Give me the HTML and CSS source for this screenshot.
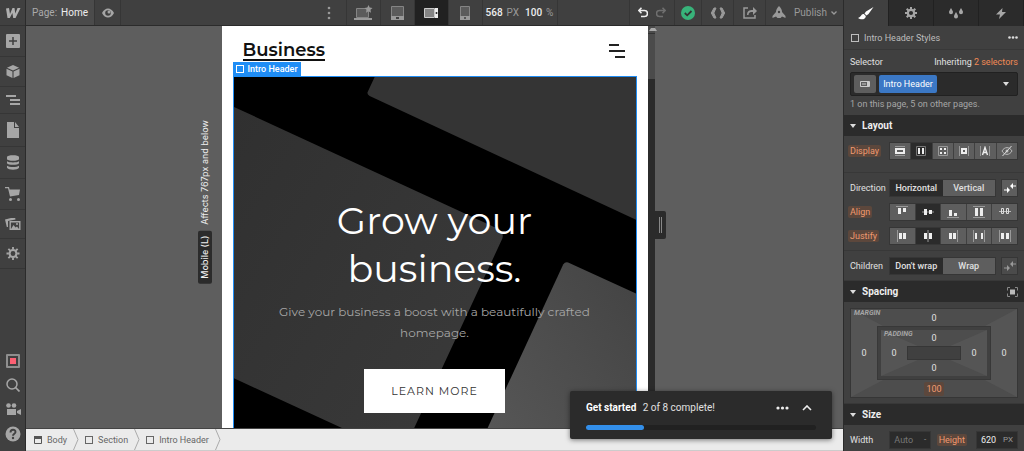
FILE: index.html
```html
<!DOCTYPE html>
<html lang="en">
<head>
    <meta charset="UTF-8">
    <meta name="viewport" content="width=device-width, initial-scale=1.0">
    <title>Designer - Home</title>
    <link rel="stylesheet" href="styles.css">
</head>
<body>

<div class="app">
    <nav class="sidebar">
        <button class="logo" aria-label="Menu">
            <svg width="16" height="12" viewBox="0 0 16 12"><path d="M1 1.500 4 1l1 6 2.500-6h2l.8 5.500L12.500 1H15.500l-5 10H8.200l-.8-5-2.600 5H2.500z" fill="#b0b0b0"/></svg>
        </button>
        <button class="tool" aria-label="Add">
            <svg width="14" height="14" viewBox="0 0 14 14"><rect width="14" height="14" rx="1" fill="#a6a6a6"/><path d="M7 3v8M3 7h8" stroke="#404040" stroke-width="1.500"/></svg>
        </button>
        <button class="tool" aria-label="Symbols">
            <svg width="14" height="13" viewBox="0 0 14 14"><path d="M7 0l6.500 3L7 6 .5 3zM0 4l6.400 3v7L0 11zM14 4 7.600 7v7l6.400-3z" fill="#a6a6a6"/></svg>
        </button>
        <button class="tool" aria-label="Navigator">
            <svg width="14" height="10" viewBox="0 0 14 10"><path d="M0 0h10v2H0zM4 4h10v2H4zM4 8h10v2H4z" fill="#a6a6a6"/></svg>
        </button>
        <button class="tool" aria-label="Pages">
            <svg width="14" height="16" viewBox="0 0 14 16"><path d="M1 0h7v6h5v10H1zM9 0l4 5H9z" fill="#a6a6a6"/></svg>
        </button>
        <button class="tool" aria-label="CMS">
            <svg width="14" height="15" viewBox="0 0 14 15"><path d="M1 2C1-.5 13-.5 13 2v2c0 2.400-12 2.400-12 0zM1 6.200c2 1.600 10 1.600 12 0v2c-1 2.200-11 2.200-12 0zM1 10.800c2 1.600 10 1.600 12 0v2c-1 2.500-11 2.500-12 0z" fill="#a6a6a6"/></svg>
        </button>
        <button class="tool" aria-label="Ecommerce">
            <svg width="16" height="14" viewBox="0 0 16 14"><path d="M0 0h4l.6 2.500H15L14 8 5 9.500 3 1.200H0z" fill="#a6a6a6"/><circle cx="5.500" cy="12.500" r="1.500" fill="#a6a6a6"/><circle cx="13.500" cy="12.500" r="1.500" fill="#a6a6a6"/></svg>
        </button>
        <button class="tool" aria-label="Assets">
            <svg width="16" height="12" viewBox="0 0 16 12"><path d="M0 1.500 10-1l.5 2.500L3 3v6L1.800 9z" fill="#a6a6a6"/><path d="M5.200 3.700h9.600v8H5.200z" fill="none" stroke="#a6a6a6" stroke-width="1.400"/><path d="M6 11l2.500-4 2 2.500 1.500-1L14 11z" fill="#a6a6a6"/><circle cx="12" cy="6" r="1" fill="#a6a6a6"/></svg>
        </button>
        <button class="tool" aria-label="Settings">
            <svg width="14" height="13" viewBox="0 0 14 14"><circle cx="7" cy="7" r="3.700" fill="none" stroke="#a6a6a6" stroke-width="2.200"/><path d="M7 0v2.500M7 11.500V14M0 7h2.500M11.500 7H14M2 2l2 2M10 10l2 2M12 2l-2 2M4 10l-2 2" stroke="#a6a6a6" stroke-width="2"/></svg>
        </button>
        <div class="helpers">
            <button aria-label="Audit">
                <svg width="14" height="14" viewBox="0 0 14 14"><rect width="14" height="14" rx="1" fill="#8e8e8e"/><rect x="2" y="2" width="10" height="10" fill="#404040"/><rect x="4" y="4" width="6" height="6" fill="#fb6073"/></svg>
            </button>
            <button aria-label="Search">
                <svg width="14" height="14" viewBox="0 0 14 14"><circle cx="6" cy="6" r="5" fill="none" stroke="#a6a6a6" stroke-width="1.500"/><path d="M9.500 9.500 13.500 13.500" stroke="#a6a6a6" stroke-width="1.700"/></svg>
            </button>
            <button aria-label="Video tutorials">
                <svg width="16" height="14" viewBox="0 0 16 14"><circle cx="3.500" cy="3.500" r="2.300" fill="#a6a6a6"/><circle cx="9" cy="3.500" r="2.300" fill="#a6a6a6"/><path d="M2 7h9v6H2zM12 9l4-2v6l-4-2z" fill="#a6a6a6"/></svg>
            </button>
            <button aria-label="Help">
                <svg width="16" height="16" viewBox="0 0 16 16"><circle cx="8" cy="8" r="7.500" fill="#a6a6a6"/><path d="M5.500 6.500C5.500 3 10.500 3 10.500 6 10.500 7.800 8 7.700 8 9.800" fill="none" stroke="#404040" stroke-width="1.900"/><circle cx="8" cy="12" r="1.200" fill="#404040"/></svg>
            </button>
        </div>
    </nav>

    <header class="topbar">
        <div class="bar-group">
            <button class="page-btn">Page: <span>Home</span></button>
            <button class="bar-btn preview-btn" aria-label="Preview">
                <svg width="12" height="10" viewBox="0 0 12 10"><path d="M0 5C3-1 9-1 12 5 9 11 3 11 0 5z" fill="#a6a6a6"/><circle cx="6" cy="5" r="2.800" fill="#404040"/><circle cx="7" cy="4" r="1.500" fill="#a6a6a6"/></svg>
            </button>
        </div>
        <div class="bar-group">
            <button class="bar-btn plain" aria-label="More breakpoints">
                <svg width="4" height="14" viewBox="0 0 4 14"><g fill="#999"><circle cx="2" cy="2" r="1.300"/><circle cx="2" cy="7" r="1.300"/><circle cx="2" cy="12" r="1.300"/></g></svg>
            </button>
            <button class="bar-btn device" aria-label="Desktop">
                <svg width="20" height="16" viewBox="0 0 20 16"><path d="M3.500 3.500h12v9h-12z" fill="#5b5b5b" stroke="#858585"/><path d="M1 13h18v2H1z" fill="#999"/><path d="M15.500 0l1.200 2.600 2.800.3-2 1.900.5 2.900-2.500-1.400L13 7.700l.5-2.900-2-1.900 2.800-.3z" fill="#999"/></svg>
            </button>
            <button class="bar-btn device" aria-label="Tablet">
                <svg width="13" height="14" viewBox="0 0 13 14"><path d="M.5.500h12v10h-12z" fill="#5b5b5b" stroke="#858585"/><path d="M0 10h13v4H0z" fill="#999"/><path d="M5 12h3" stroke="#404040" stroke-width="2"/></svg>
            </button>
            <button class="bar-btn device active" aria-label="Mobile landscape">
                <svg width="14" height="10" viewBox="0 0 14 10"><path d="M.5.500h10v9H.5z" fill="#858585" stroke="#ccc"/><path d="M11 0h3v10h-3z" fill="#eee"/><circle cx="12.500" cy="5" r="1" fill="#222"/></svg>
            </button>
            <button class="bar-btn device" aria-label="Mobile portrait">
                <svg width="10" height="14" viewBox="0 0 10 14"><path d="M.5.500h9v10h-9z" fill="#5b5b5b" stroke="#858585"/><path d="M0 10h10v4H0z" fill="#999"/><circle cx="5" cy="12" r="1" fill="#404040"/></svg>
            </button>
            <button class="bar-btn size-btn"><b>568</b> PX <b class="zoom">100</b> %</button>
        </div>
        <div class="bar-group end">
            <div class="history">
                <button aria-label="Undo">
                    <svg width="10" height="11" viewBox="0 0 10 11"><path d="M1 3.500h5.500a2.800 2.800 0 0 1 0 6H3M3.500.800.800 3.500l2.700 2.700" fill="none" stroke="#eee" stroke-width="1.600"/></svg>
                </button>
                <button aria-label="Redo">
                    <svg width="10" height="11" viewBox="0 0 10 11"><path d="M9 3.500H3.500a2.800 2.800 0 0 0 0 6H7M6.500.800 9.200 3.500 6.500 6.200" fill="none" stroke="#6f6f6f" stroke-width="1.600"/></svg>
                </button>
            </div>
            <button class="bar-btn" aria-label="Saved">
                <svg width="14" height="14" viewBox="0 0 14 14"><circle cx="7" cy="7" r="7" fill="#38b37a"/><path d="M3.800 7l2.400 2.300 4.300-4.300" fill="none" stroke="#333" stroke-width="1.800"/></svg>
            </button>
            <button class="bar-btn wide" aria-label="Code export">
                <svg width="16" height="12" viewBox="0 0 16 12"><path d="M6 1H4L1.300 6 4 11h2L3.800 6zM10 1h2l2.700 5L12 11h-2l2.200-5z" fill="#999" stroke="#999"/></svg>
            </button>
            <button class="bar-btn wide" aria-label="Share">
                <svg width="14" height="13" viewBox="0 0 14 13"><path d="M5 2H1v10h11V9" fill="none" stroke="#999" stroke-width="1.500"/><path d="M4 9c0-4 2-5 6-5V1l4 4-4 4V6C7 6 5.500 6.500 5.500 9z" fill="#999"/></svg>
            </button>
            <button class="bar-btn publish">
                <svg width="14" height="13" viewBox="0 0 14 13"><path d="M7 0c2 2 3 4 3 6l3.500 4v2L10 10.500 8.500 12h-3L4 10.500.500 12v-2L4 6c0-2 1-4 3-6z" fill="#999"/><circle cx="7" cy="6" r="1.200" fill="#404040"/></svg>
                <span>Publish</span>
                <svg width="6" height="4" viewBox="0 0 6 4"><path d="M.5.500 3 3 5.500.500" fill="none" stroke="#999" stroke-width="1.300"/></svg>
            </button>
        </div>
    </header>

    <main class="canvas">
        <div class="frame-wrap">
            <div class="frame-note"><span>Affects 767px and below</span> <strong>Mobile (L)</strong></div>
            <div class="frame">
                <div class="site-nav">
                    <a class="brand" href="#">Business</a>
                    <button class="burger" aria-label="Open menu">
                        <svg width="18" height="14" viewBox="0 0 18 14"><path d="M1 1h10M1 7h16M7 13h10" stroke="#222" stroke-width="2"/></svg>
                    </button>
                </div>
                <section class="hero">
                    <svg class="hero-bg" viewBox="0 0 403 465" preserveAspectRatio="xMidYMin slice">
                        <defs>
                            <linearGradient id="slab" x1="0" y1="0" x2="1" y2="1">
                                <stop offset="0" stop-color="#303030"/>
                                <stop offset="1" stop-color="#3c3c3c"/>
                            </linearGradient>
                            <linearGradient id="slabLight" x1="1" y1="0" x2="0" y2="1">
                                <stop offset="0" stop-color="#434343"/>
                                <stop offset="1" stop-color="#606060"/>
                            </linearGradient>
                        </defs>
                        <rect width="403" height="465" fill="#000"/>
                        <path d="M141 0 134 15Q133 17 136 19L403 143V0z" fill="#343434"/>
                        <path d="M0 30 264 152Q271 155 269 162L128 465V361L0 302z" fill="url(#slab)"/>
                        <path d="M202 465 330 188Q332 185 335 186L403 217V465z" fill="url(#slabLight)"/>
                    </svg>
                    <span class="element-tag"><i class="box-icon"></i>Intro Header</span>
                    <h1>Grow your business.</h1>
                    <p>Give your business a boost with a beautifully crafted homepage.</p>
                    <a class="cta" href="#">LEARN MORE</a>
                </section>
            </div>
            <div class="scrollbar"><span class="scroll-up"></span></div>
            <div class="resize-handle"></div>
        </div>
    </main>

    <footer class="breadcrumbs">
        <button class="crumb"><svg width="8" height="8" viewBox="0 0 8 8"><path d="M.5.500h7v7h-7z" fill="none" stroke="#555"/><path d="M0 0h8v3H0z" fill="#555"/></svg>Body</button>
        <svg class="crumb-sep" width="6" height="21" viewBox="0 0 6 21"><path d="M.5 0 5 10.500.500 21" fill="none" stroke="#aaa"/></svg>
        <button class="crumb"><i class="box-icon"></i>Section</button>
        <svg class="crumb-sep" width="6" height="21" viewBox="0 0 6 21"><path d="M.5 0 5 10.500.500 21" fill="none" stroke="#aaa"/></svg>
        <button class="crumb"><i class="box-icon"></i>Intro Header</button>
        <svg class="crumb-sep" width="6" height="21" viewBox="0 0 6 21"><path d="M.5 0 5 10.500.500 21" fill="none" stroke="#aaa"/></svg>
    </footer>

    <div class="toast">
        <div class="toast-head">
            <label for="setup"><b>Get started</b> 2 of 8 complete!</label>
            <button aria-label="More"><svg width="13" height="4" viewBox="0 0 13 4"><g fill="#eee"><circle cx="2" cy="2" r="1.600"/><circle cx="6.500" cy="2" r="1.600"/><circle cx="11" cy="2" r="1.600"/></g></svg></button>
            <button aria-label="Expand"><svg width="10" height="6" viewBox="0 0 10 6"><path d="M1 5l4-4 4 4" fill="none" stroke="#eee" stroke-width="1.600"/></svg></button>
        </div>
        <progress id="setup" value="2" max="8"></progress>
    </div>

    <aside class="panel">
        <div class="tabs">
            <button class="active" aria-label="Style">
                <svg width="16" height="13" viewBox="0 0 16 13"><path d="M15.500 0 8 4.500 6.500 6.500l2 2L10.500 7zM5.800 7C3 6.500 3.500 10 0 11c3 2.300 8 1.500 7.800-2z" fill="#fff"/></svg>
            </button>
            <button aria-label="Settings">
                <svg width="12" height="12" viewBox="0 0 14 14"><circle cx="7" cy="7" r="3.700" fill="none" stroke="#a6a6a6" stroke-width="2.600"/><path d="M7 0v2.500M7 11.500V14M0 7h2.500M11.500 7H14M2 2l2 2M10 10l2 2M12 2l-2 2M4 10l-2 2" stroke="#a6a6a6" stroke-width="2.400"/></svg>
            </button>
            <button aria-label="Style manager">
                <svg width="14" height="11" viewBox="0 0 14 11"><path d="M2 0C3 2 4 3 4 4.200a2 2 0 0 1-4 0C0 3 1 2 2 0zM12 0c1 2 2 3 2 4.200a2 2 0 0 1-4 0c0-1.200 1-2.200 2-4.200zM7 4c1 2 2 3 2 4.500a2 2 0 0 1-4 0C5 7 6 6 7 4z" fill="#a6a6a6"/></svg>
            </button>
            <button aria-label="Interactions">
                <svg width="10" height="11" viewBox="0 0 10 11"><path d="M6.500 0 0 6.500h4L3 11l7-7H6z" fill="#a6a6a6"/></svg>
            </button>
        </div>

        <div class="panel-title">
            <i class="box-icon"></i><span>Intro Header Styles</span>
            <button aria-label="More options"><svg width="10" height="3" viewBox="0 0 10 3"><g fill="#ddd"><circle cx="1.500" cy="1.500" r="1.300"/><circle cx="5" cy="1.500" r="1.300"/><circle cx="8.500" cy="1.500" r="1.300"/></g></svg></button>
        </div>

        <div class="selector">
            <div class="selector-head"><span>Selector</span><span>Inheriting <a href="#">2 selectors</a></span></div>
            <div class="selector-box">
                <button class="state" aria-label="Breakpoint"><svg width="10" height="6" viewBox="0 0 10 6"><path d="M.5.500h9v5h-9z" fill="none" stroke="#ccc"/><path d="M2 3h4" stroke="#ccc"/><path d="M7 1h3v4H7z" fill="#ccc"/></svg></button>
                <button class="class-tag">Intro Header</button>
                <button class="drop" aria-label="Show selectors"><i class="caret"></i></button>
            </div>
            <p>1 on this page, 5 on other pages.</p>
        </div>

        <h2><i class="caret"></i>Layout</h2>
        <div class="group display-group">
            <div class="row">
                <span class="name"><mark>Display</mark></span>
                <div class="segment">
                    <button aria-label="Block"><svg width="10" height="10" viewBox="0 0 10 10"><path d="M0 .5h10M0 9.500h10" stroke="#999"/><path d="M1 3h8v4H1z" fill="none" stroke="#eee" stroke-width="2"/></svg></button>
                    <button class="on" aria-label="Flex"><svg width="10" height="10" viewBox="0 0 10 10"><path d="M.5.500h9v9h-9z" fill="none" stroke="#777"/><path d="M2 2h2v6H2zM6 2h2v6H6z" fill="#eee"/></svg></button>
                    <button aria-label="Grid"><svg width="10" height="10" viewBox="0 0 10 10"><path d="M.5.500h9v9h-9z" fill="none" stroke="#999"/><path d="M2 2h2v2H2zM6 2h2v2H6zM2 6h2v2H2zM6 6h2v2H6z" fill="#eee"/></svg></button>
                    <button aria-label="Inline block"><svg width="10" height="10" viewBox="0 0 10 10"><path d="M.5 0v10M9.500 0v10" stroke="#999"/><path d="M3 3h4v4H3z" fill="none" stroke="#eee" stroke-width="2"/></svg></button>
                    <button aria-label="Inline"><svg width="10" height="10" viewBox="0 0 10 10"><path d="M.5 0v10M9.500 0v10" stroke="#999"/><path d="M2.500 9 5 1.500 7.500 9M3.300 6.500h3.400" fill="none" stroke="#eee" stroke-width="1.400"/></svg></button>
                    <button aria-label="None"><svg width="12" height="10" viewBox="0 0 12 10"><path d="M1 5c2.500-4.500 7.500-4.500 10 0-2.500 4.500-7.500 4.500-10 0z" fill="none" stroke="#bbb"/><circle cx="6" cy="5" r="1.500" fill="#bbb"/><path d="M1.500 10 10.500 0" stroke="#ddd"/></svg></button>
                </div>
            </div>
        </div>
        <div class="group">
            <div class="row">
                <span class="name">Direction</span>
                <div class="segment text"><button class="on">Horizontal</button><button>Vertical</button></div>
                <button class="swap" aria-label="Reverse"><svg width="12" height="10" viewBox="0 0 12 10"><path d="M7 3h5M0 7h5" stroke="#fff"/><path d="M9 0v6L6 3zM3 4v6l3-3z" fill="#fff"/></svg></button>
            </div>
            <div class="row">
                <span class="name"><mark>Align</mark></span>
                <div class="segment">
                    <button aria-label="Start"><svg width="12" height="12" viewBox="0 0 12 12"><path d="M0 .5h12" stroke="#999"/><path d="M2 2h3v6H2zM7 2h3v4H7z" fill="#eee"/></svg></button>
                    <button class="on" aria-label="Center"><svg width="12" height="12" viewBox="0 0 12 12"><path d="M0 6h12" stroke="#999"/><path d="M2 3h3v6H2zM7 4h3v4H7z" fill="#eee"/></svg></button>
                    <button aria-label="End"><svg width="12" height="12" viewBox="0 0 12 12"><path d="M0 11.500h12" stroke="#999"/><path d="M2 4h3v6H2zM7 7h3v3H7z" fill="#eee"/></svg></button>
                    <button aria-label="Stretch"><svg width="12" height="12" viewBox="0 0 12 12"><path d="M0 .5h12M0 11.500h12" stroke="#999"/><path d="M2 2h3v8H2zM7 2h3v8H7z" fill="#eee"/></svg></button>
                    <button aria-label="Baseline"><svg width="12" height="12" viewBox="0 0 12 12"><path d="M0 5.500h12" stroke="#bbb"/><path d="M2.500 2.500h2v5h-2zM7.500 2.500h2v5h-2z" fill="none" stroke="#ddd"/></svg></button>
                </div>
            </div>
            <div class="row">
                <span class="name"><mark>Justify</mark></span>
                <div class="segment">
                    <button aria-label="Start"><svg width="12" height="12" viewBox="0 0 12 12"><path d="M1.500 0v12" stroke="#999"/><path d="M3 3h3v6H3zM7 3h3v6H7z" fill="#eee"/></svg></button>
                    <button class="on" aria-label="Center"><svg width="12" height="12" viewBox="0 0 12 12"><path d="M6 0v12" stroke="#999"/><path d="M2 3h3v6H2zM7 3h3v6H7z" fill="#eee"/></svg></button>
                    <button aria-label="End"><svg width="12" height="12" viewBox="0 0 12 12"><path d="M10.500 0v12" stroke="#999"/><path d="M2 3h3v6H2zM6 3h3v6H6z" fill="#eee"/></svg></button>
                    <button aria-label="Space between"><svg width="12" height="12" viewBox="0 0 12 12"><path d="M.5 0v12M11.500 0v12" stroke="#999"/><path d="M2 3h2v6H2zM8 3h2v6H8z" fill="#eee"/></svg></button>
                    <button aria-label="Space around"><svg width="12" height="12" viewBox="0 0 12 12"><path d="M.5 0v12M11.500 0v12" stroke="#999"/><path d="M2 3h3v6H2zM7 3h3v6H7z" fill="#eee"/></svg></button>
                </div>
            </div>
        </div>
        <div class="group">
            <div class="row">
                <span class="name">Children</span>
                <div class="segment text"><button class="on">Don't wrap</button><button>Wrap</button></div>
                <button class="swap off" aria-label="Reverse wrap"><svg width="12" height="10" viewBox="0 0 12 10"><path d="M7 3h5M0 7h5" stroke="#999"/><path d="M9 0v6L6 3zM3 4v6l3-3z" fill="#999"/></svg></button>
            </div>
        </div>

        <h2><i class="caret"></i>Spacing
            <button aria-label="Center element"><svg width="11" height="10" viewBox="0 0 11 10"><path d="M3 .5H.5v3M8 .5h2.500v3M.5 6.500v3H3M10.500 6.500v3H8" fill="none" stroke="#888"/><path d="M3 2.500h5v5H3z" fill="#bbb"/></svg></button>
        </h2>
        <div class="group">
            <div class="spacing margin">
                <svg class="facets" viewBox="0 0 100 100" preserveAspectRatio="none"><path d="M0 0 50 50 0 100zM100 0 50 50 100 100z" fill="#555"/></svg>
                <em>MARGIN</em>
                <button class="top">0</button>
                <button class="left">0</button>
                <div class="spacing padding">
                    <svg class="facets" viewBox="0 0 100 100" preserveAspectRatio="none"><path d="M0 0 50 50 0 100zM100 0 50 50 100 100z" fill="#555"/></svg>
                    <em>PADDING</em>
                    <button class="top">0</button>
                    <button class="left">0</button>
                    <div class="core"></div>
                    <button class="right">0</button>
                    <button class="bottom">0</button>
                </div>
                <button class="right">0</button>
                <button class="bottom"><mark>100</mark></button>
            </div>
        </div>

        <h2><i class="caret"></i>Size</h2>
        <div class="group size-row">
            <label for="width">Width</label>
            <div class="field"><input id="width" type="text" placeholder="Auto"><span>-</span></div>
            <label for="height"><mark>Height</mark></label>
            <div class="field"><input id="height" type="text" value="620"><span>PX</span></div>
        </div>
    </aside>
</div>

</body>
</html>
```
FILE: styles.css
```css
* {
    box-sizing: border-box;
}
body {
    margin: 0;
    font-family: Roboto, "Liberation Sans", sans-serif;
    font-size: 9px;
    line-height: 12px;
    color: #e0e0e0;
    background-color: #5e5e5e;
}
button {
    display: flex;
    align-items: center;
    justify-content: center;
    padding: 0;
    border: none;
    background: none;
    color: inherit;
    font: inherit;
    cursor: pointer;
}
svg {
    display: block;
    flex: none;
}
a {
    text-decoration: none;
}
mark {
    padding: 1px 2px;
    border-radius: 2px;
    background-color: #5c473c;
    color: #f09a70;
}
.app {
    position: relative;
    display: grid;
    grid-template-columns: 26px 1fr 181px;
    grid-template-rows: 26px 1fr 22px;
    height: 100vh;
    overflow: hidden;
}

/* left toolbar */
.sidebar {
    grid-row: 1 / 4;
    display: flex;
    flex-direction: column;
    background-color: #404040;
    border-right: 1px solid #2b2b2b;
}
.logo {
    height: 26px;
    border-bottom: 1px solid #333;
}
.tool {
    padding: 8px 0;
    border-bottom: 1px solid #363636;
}
.helpers {
    display: flex;
    flex-direction: column;
    align-items: center;
    gap: 10px;
    margin-top: auto;
    padding-bottom: 9px;
}

/* top bar */
.topbar {
    display: grid;
    grid-template-columns: 1fr auto 1fr;
    background-color: #404040;
    border-bottom: 1px solid #2b2b2b;
    color: #999;
    font-size: 10px;
}
.bar-group {
    display: flex;
}
.bar-group.end {
    justify-content: flex-end;
}
.page-btn {
    gap: 4px;
    width: 68px;
    background-color: #4b4b4b;
    color: #aaa;
}
.page-btn span {
    color: #eee;
}
.bar-btn {
    width: 27px;
    border-left: 1px solid #363636;
}
.preview-btn {
    border-right: 1px solid #363636;
}
.bar-btn.plain {
    width: 34px;
    border: none;
}
.bar-btn.device {
    width: 34px;
}
.bar-btn.wide {
    width: 32px;
}
.bar-btn.active {
    background-color: #212121;
}
.bar-btn.size-btn {
    gap: 4px;
    width: 76px;
    border-right: 1px solid #363636;
}
.size-btn b {
    color: #eee;
    font-weight: 500;
}
.size-btn .zoom {
    margin-left: 2px;
}
.history {
    display: flex;
    gap: 8px;
    padding: 0 8px;
    border-left: 1px solid #363636;
}
.bar-btn.publish {
    gap: 4px;
    width: 78px;
}
.publish span {
    padding-left: 4px;
}

/* canvas */
.canvas {
    display: flex;
    justify-content: center;
    min-height: 0;
    border-bottom: 1px solid #444;
}
.frame-wrap {
    position: relative;
    width: 426px;
}
.frame {
    height: 100%;
    overflow: hidden;
    background-color: #fff;
    padding: 0 11px;
    font-family: Montserrat, "Liberation Sans", sans-serif;
}
.frame-note {
    position: absolute;
    right: 100%;
    top: 94px;
    display: flex;
    align-items: center;
    gap: 6px;
    margin-right: 10px;
    writing-mode: vertical-rl;
    rotate: 180deg;
    flex-direction: row-reverse;
    color: #eee;
    font-family: Inter, "Liberation Sans", sans-serif;
    line-height: 14px;
}
.frame-note strong {
    padding: 5px 0;
    border-radius: 2px;
    background-color: #2b2b2b;
    font-weight: 500;
}
.site-nav {
    display: flex;
    justify-content: space-between;
    align-items: center;
    height: 50px;
    padding: 0 11px 0 10px;
}
.brand {
    border-bottom: 2px solid #111;
    color: #111;
    font-size: 18px;
    font-weight: 600;
    line-height: 18px;
}
.hero {
    position: relative;
    display: flex;
    flex-direction: column;
    align-items: center;
    justify-content: center;
    height: 465px;
    padding: 0 40px 7px;
    border: 1px solid #1f8df5;
    text-align: center;
}
.hero-bg {
    position: absolute;
    inset: 0;
    width: 100%;
    height: 100%;
}
.element-tag {
    position: absolute;
    left: -1px;
    bottom: 100%;
    display: flex;
    align-items: center;
    gap: 4px;
    margin-bottom: 1px;
    padding: 1px 3px;
    background-color: #1f8df5;
    color: #fff;
    font-family: Roboto, "Liberation Sans", sans-serif;
    font-weight: 500;
}
.hero h1 {
    position: relative;
    margin: 0;
    width: 240px;
    color: #fff;
    font-size: 38px;
    font-weight: 400;
    line-height: 48px;
}
.hero p {
    position: relative;
    margin: 8px 0 26px;
    color: #a6a6a6;
    font-size: 12px;
    font-weight: 400;
    line-height: 21px;
}
.cta {
    position: relative;
    padding: 12px 27px;
    background-color: #fff;
    color: #333;
    font-size: 11px;
    letter-spacing: 1px;
    line-height: 20px;
}
.scrollbar {
    position: absolute;
    top: 0;
    bottom: 0;
    left: 100%;
    width: 7px;
    background: linear-gradient(#4b4b4b 53px, #2b2b2b 53px);
}
.scroll-up {
    display: block;
    height: 8px;
    padding-top: 2px;
    border-bottom: 1px solid #333;
}
.scroll-up::before {
    content: "";
    display: block;
    width: 4px;
    margin-left: 1px;
    border: 2px solid transparent;
    border-top: none;
    border-bottom: 3px solid #aaa;
}
.resize-handle {
    position: absolute;
    top: 185px;
    left: 433px;
    width: 11px;
    height: 28px;
    padding: 6px 4px;
    border-radius: 0 2px 2px 0;
    background-color: #2b2b2b;
}
.resize-handle::before {
    content: "";
    display: block;
    height: 16px;
    border: 1px solid #888;
    border-width: 0 1px;
}

/* breadcrumbs */
.box-icon {
    width: 8px;
    height: 8px;
    border: 1px solid currentColor;
}
.breadcrumbs {
    display: flex;
    align-items: center;
    padding-left: 8px;
    background-color: #ebebeb;
    border-bottom: 1px solid #ccc;
    color: #666;
}
.crumb {
    gap: 5px;
    padding-right: 6px;
}
.crumb-sep {
    margin-right: 6px;
}

/* onboarding toast */
.toast {
    position: absolute;
    right: 192px;
    bottom: 12px;
    width: 262px;
    padding: 10px 16px 9px;
    border-radius: 2px;
    background-color: #2b2b2b;
    box-shadow: 0 1px 5px rgba(0, 0, 0, 0.5);
    font-size: 10px;
    line-height: 14px;
}
.toast-head {
    display: flex;
    align-items: center;
    gap: 13px;
    padding-right: 4px;
}
.toast label {
    flex: 1;
}
.toast b {
    margin-right: 4px;
    color: #fff;
    font-weight: 700;
}
progress {
    display: block;
    width: 100%;
    height: 5px;
    margin-top: 10px;
    appearance: none;
    border: none;
}
progress::-webkit-progress-bar {
    border-radius: 3px;
    background-color: #212121;
}
progress::-webkit-progress-value {
    border-radius: 3px;
    background-color: #338fea;
}

/* style panel */
.panel {
    grid-column: 3;
    grid-row: 1 / 4;
    overflow: hidden;
    background-color: #404040;
    border-left: 1px solid #2b2b2b;
}
.tabs {
    display: flex;
    height: 26px;
    background-color: #2b2b2b;
}
.tabs button {
    flex: 1;
    border-right: 1px solid #212121;
}
.tabs .active {
    background-color: #404040;
}
.panel-title {
    display: flex;
    align-items: center;
    gap: 5px;
    height: 24px;
    padding: 0 6px 0 7px;
    border-bottom: 1px solid #383838;
    color: #bdbdbd;
}
.panel-title button {
    margin-left: auto;
}
.selector {
    padding: 6px;
    height: 65px;
}
.selector-head {
    display: flex;
    justify-content: space-between;
}
.selector-head a {
    color: #f08a55;
}
.selector-box {
    display: flex;
    align-items: center;
    gap: 3px;
    height: 24px;
    margin-top: 4px;
    padding: 0 3px;
    border: 1px solid #212121;
    border-radius: 2px;
    background-color: #2b2b2b;
}
.selector-box button {
    height: 18px;
    border-radius: 2px;
}
.state {
    width: 22px;
    background-color: #5e5e5e;
}
.class-tag {
    width: 58px;
    background-color: #3b78c5;
    color: #fff;
}
.selector-box .drop {
    margin-left: auto;
    padding-right: 5px;
}
.selector p {
    margin: 2px 0 0;
    color: #a6a6a6;
}
.caret {
    border: 3px solid transparent;
    border-top: 4px solid #ddd;
    border-bottom: none;
}
.panel h2 {
    display: flex;
    align-items: center;
    gap: 6px;
    height: 21px;
    margin: 0;
    padding: 0 6px;
    background-color: #2b2b2b;
    color: #eee;
    font-size: 10px;
    font-weight: 700;
}
.panel h2 button {
    margin-left: auto;
}
.group {
    display: flex;
    flex-direction: column;
    gap: 6px;
    padding: 6px 6px 5px;
    border-bottom: 1px solid #383838;
}
.display-group {
    padding-bottom: 12px;
}
.row {
    display: flex;
    align-items: center;
    height: 18px;
}
.name {
    width: 39px;
}
.name mark {
    margin-left: -2px;
}
.segment {
    display: flex;
    flex: 1;
    gap: 1px;
    height: 18px;
    border: 1px solid #363636;
}
.segment button {
    flex: 1;
    background-color: #5e5e5e;
}
.segment .on {
    background-color: #2b2b2b;
}
.segment.text {
    gap: 0;
    font-weight: 500;
}
.swap {
    width: 17px;
    height: 18px;
    margin-left: 5px;
    border: 1px solid #363636;
    background-color: #5e5e5e;
}
.swap.off {
    background-color: #4b4b4b;
}

/* box model */
.spacing {
    position: relative;
    display: grid;
    align-items: center;
    justify-items: center;
    background-color: #4d4d4d;
}
.spacing em {
    position: absolute;
    top: 0;
    left: 3px;
    color: #a6a6a6;
    font-size: 7px;
    font-weight: 700;
    line-height: 9px;
}
.spacing button {
    position: relative;
}
.facets {
    position: absolute;
    inset: 0;
    width: 100%;
    height: 100%;
}
.margin {
    grid-template: 17px 54px 17px / 26px 1fr 26px;
    border: 1px solid #363636;
}
.padding {
    align-self: stretch;
    justify-self: stretch;
    grid-template: 16px 14px 16px / 26px 1fr 26px;
    border: 4px solid #404040;
    outline: 1px solid #383838;
    outline-offset: -1px;
}
.top,
.bottom {
    grid-column: 1 / 4;
}
.core {
    position: relative;
    align-self: stretch;
    justify-self: stretch;
    border: 1px solid #363636;
    background-color: #404040;
}
.size-row {
    flex-direction: row;
    align-items: center;
    justify-content: space-between;
    gap: 4px;
}
.size-row label {
    width: 34px;
}
.field {
    display: flex;
    align-items: center;
    width: 42px;
    height: 18px;
    padding: 0 4px;
    border: 1px solid #363636;
    background-color: #2b2b2b;
    color: #999;
    font-size: 8px;
}
.field input {
    flex: 1;
    min-width: 0;
    padding: 0;
    border: none;
    outline: none;
    background: none;
    color: #eee;
    font: inherit;
    font-size: 9px;
}
.field input::placeholder {
    color: #777;
}
```
